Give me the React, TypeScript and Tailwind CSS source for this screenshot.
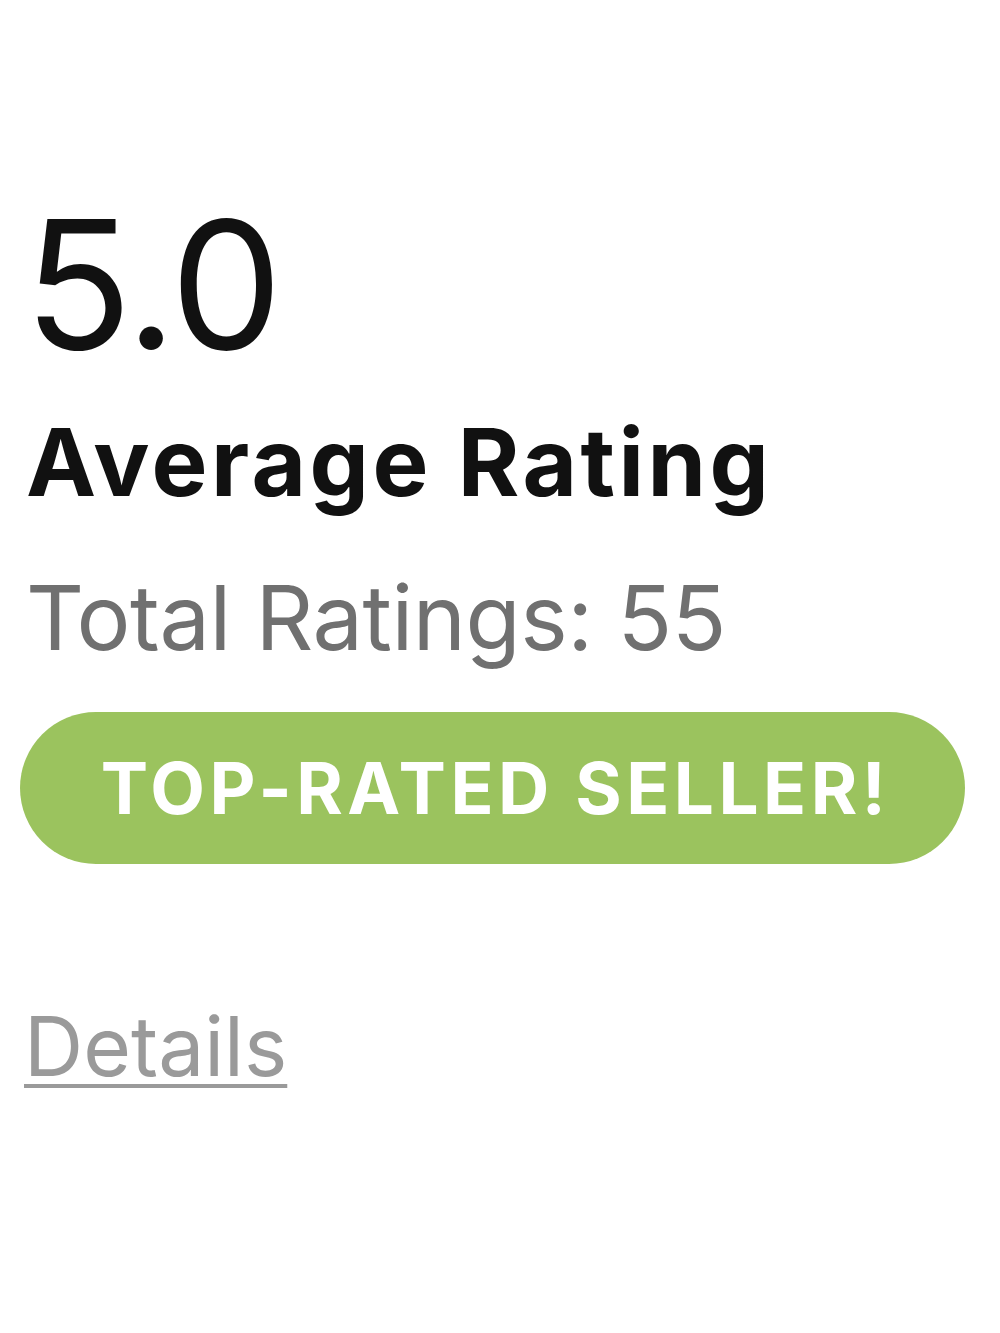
export default function App() {
  return (
    <div className="w-[1000px] h-[1333px] bg-white" style={{ fontFamily: "Inter, 'Noto Sans', sans-serif" }}>
      <div className="pt-[190px] pl-[20px] pr-[35px] flex flex-col items-start">
        <div className="text-[178px] leading-[190px] text-[#111111] font-normal tracking-[-2px] pl-[4px]">5.0</div>
        <div className="mt-[32px] text-[94px] leading-[100px] font-bold text-[#111111] pl-[6px] tracking-[3.5px]">Average Rating</div>
        <div className="mt-[56px] text-[90px] leading-[100px] text-[#707070] pl-[6px] tracking-[-0.5px]">Total Ratings: 55</div>
        <div className="mt-[44px] w-[945px] h-[152px] rounded-full bg-[#9bc35e] flex items-center justify-center">
          <span className="text-[71px] font-bold text-white tracking-[4.5px] pl-[6px]">TOP-RATED SELLER!</span>
        </div>
        <a className="mt-[138px] text-[82px] leading-[90px] text-[#9a9a9a] underline underline-offset-[8px] decoration-[4px] pl-[4px]">Details</a>
      </div>
    </div>
  );
}
